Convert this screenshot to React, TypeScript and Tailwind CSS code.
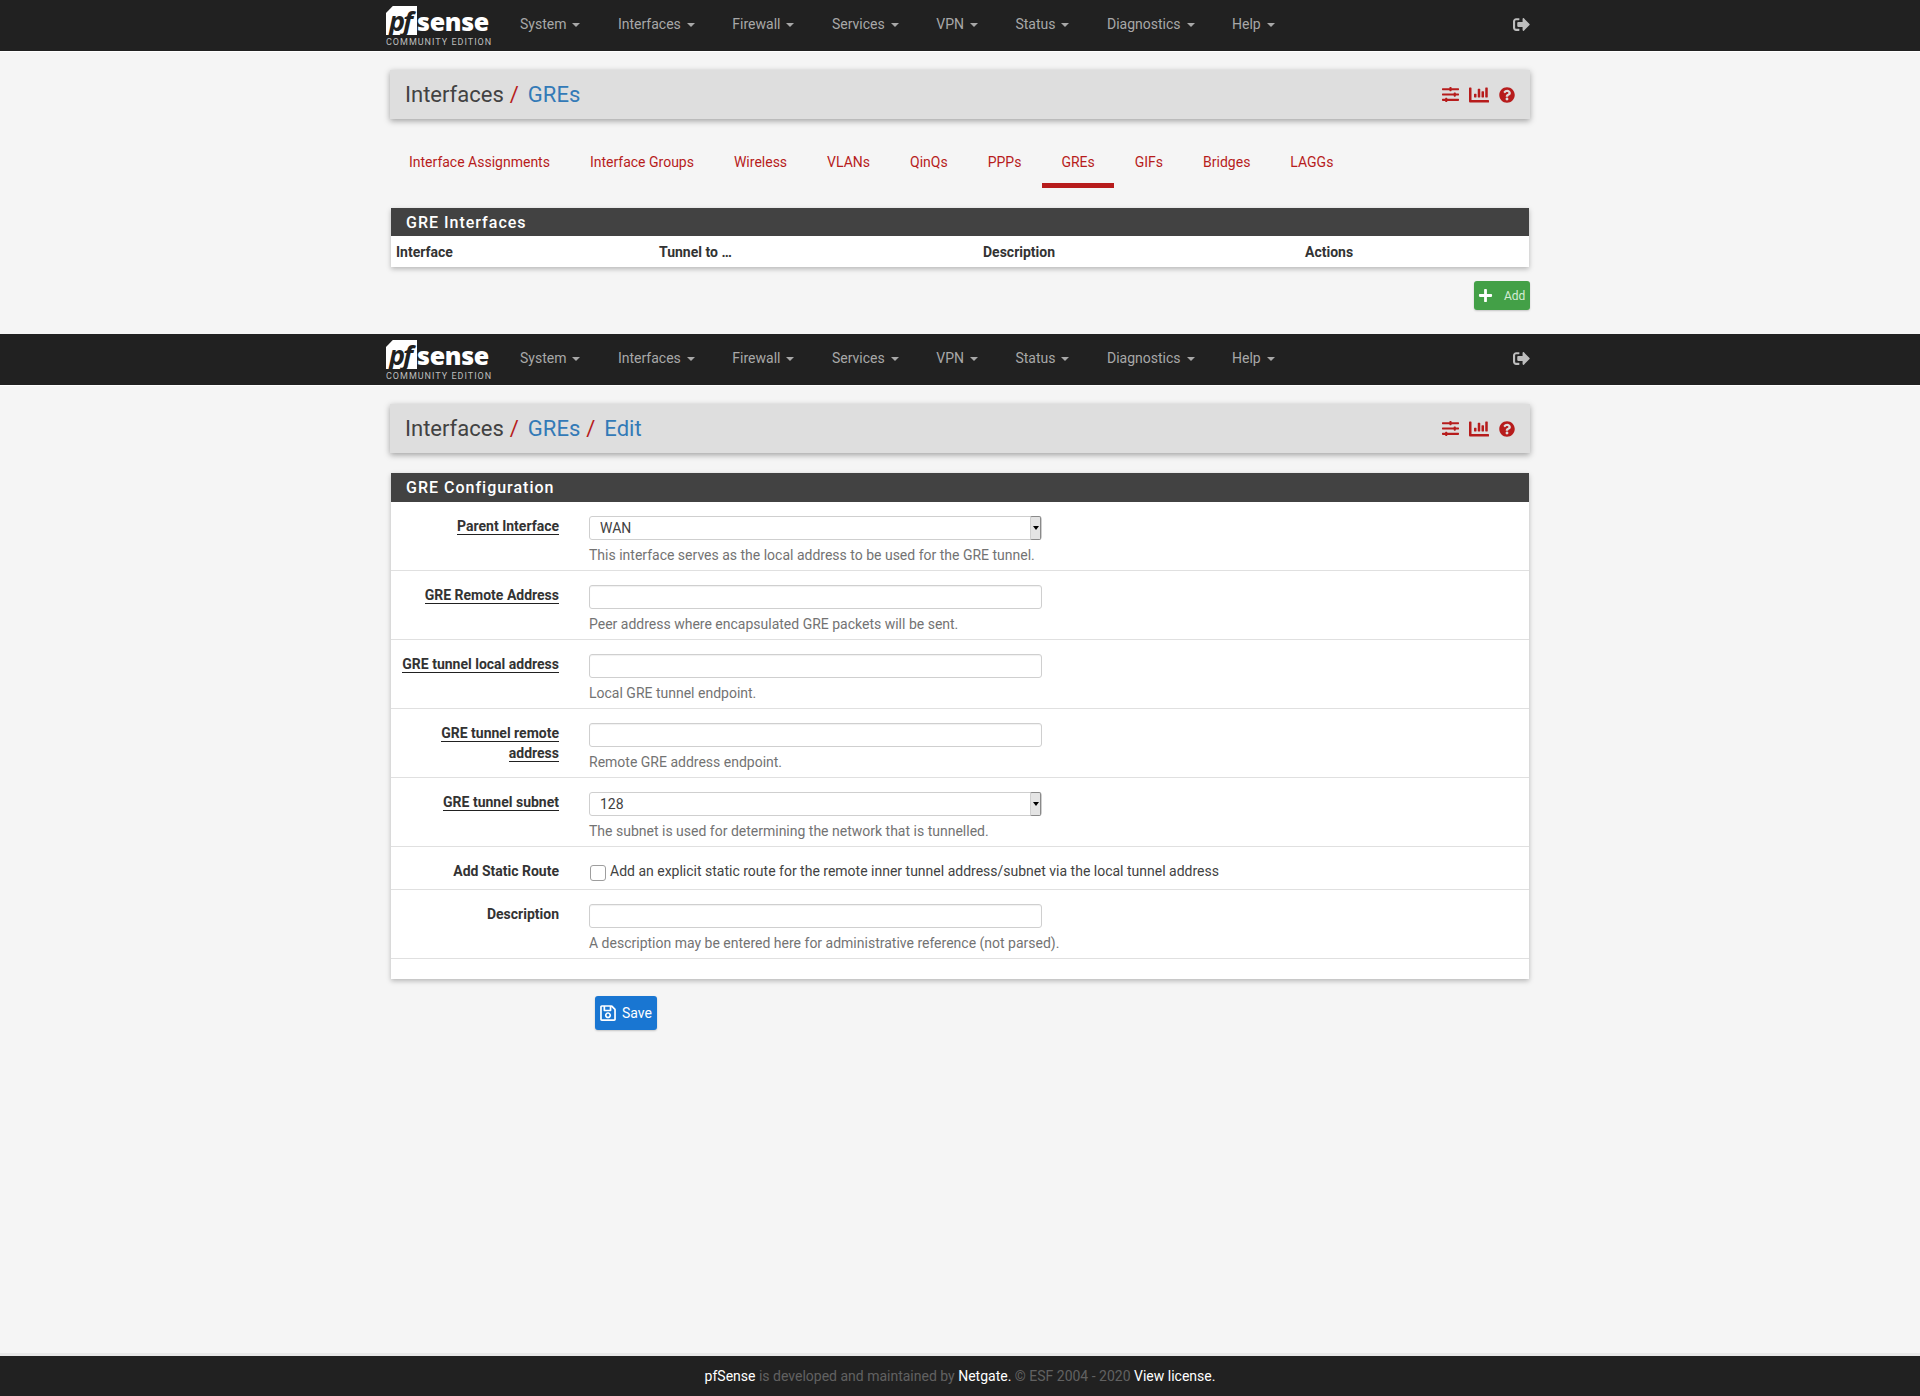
import { FaChartBar, FaPlus, FaQuestionCircle, FaRegSave, FaSignOutAlt, FaSlidersH } from "react-icons/fa";

const menu = ["System", "Interfaces", "Firewall", "Services", "VPN", "Status", "Diagnostics", "Help"];
const tabs = ["Interface Assignments", "Interface Groups", "Wireless", "VLANs", "QinQs", "PPPs", "GREs", "GIFs", "Bridges", "LAGGs"];

function Logo() {
  return (
    <div className="w-[110px] shrink-0 ml-[-4px] mb-[2px]">
      <div className="flex items-end h-[34px]">
        <div className="relative w-[31px] h-[29px] bg-white [clip-path:polygon(22%_0,100%_0,100%_100%,0_100%,0_24%)]">
          <span className="absolute left-[3px] top-[0px] text-[27px] leading-[29px] font-bold italic text-[#212121] font-['Open_Sans',sans-serif] tracking-[-2px]">
            pf
          </span>
        </div>
        <span className="text-[25px] leading-[30px] font-extrabold text-white font-['Open_Sans',sans-serif] tracking-[-0.3px] mb-[-1px]">
          sense
        </span>
      </div>
      <div className="text-[9px] leading-[11px] mt-[2px] text-[#bdbdbd] tracking-[1px] whitespace-nowrap">
        COMMUNITY EDITION
      </div>
    </div>
  );
}

function Navbar() {
  return (
    <nav className="h-[52px] bg-[#212121] border-b border-white shrink-0">
      <div className="w-[1140px] mx-auto h-[51px] flex items-center relative">
        <Logo />
        <ul className="flex items-center gap-[37.5px] ml-[24px] mb-[2px]">
          {menu.map((item) => (
            <li key={item} className="flex items-center text-[14px] text-[#a8a8a8]">
              {item}
              <span className="ml-[6px] mt-[1px] border-x-[4px] border-x-transparent border-t-[4px] border-t-[#a8a8a8]" />
            </li>
          ))}
        </ul>
        <FaSignOutAlt className="ml-auto mb-[3px] text-[17px] text-[#bdbdbd]" />
      </div>
    </nav>
  );
}

function Breadcrumb({ items }: { items: string[] }) {
  return (
    <div className="mt-[18px] h-[49px] bg-[#dedede] shadow-[0_2px_6px_rgba(0,0,0,0.35)] flex items-center justify-between pl-[15px] pr-[15px]">
      <h1 className="text-[22px] text-[#424242] flex items-center">
        <span>Interfaces</span>
        {items.map((item) => (
          <span key={item} className="flex items-center">
            <span className="text-[#b71c1c] ml-[6px] mr-[9px]">/</span>
            <span className="text-[#337ab7]">{item}</span>
          </span>
        ))}
      </h1>
      <div className="flex items-center gap-[10px] text-[#b71c1c] text-[16px]">
        <FaSlidersH className="text-[17px]" />
        <FaChartBar className="text-[20px]" />
        <FaQuestionCircle />
      </div>
    </div>
  );
}

function PanelHeading({ title, tall }: { title: string; tall?: boolean }) {
  return (
    <div className={`${tall ? "h-[29px]" : "h-[28px]"} bg-[#424242] text-white text-[16px] font-medium leading-[30px] pl-[15px] tracking-[1px]`}>
      {title}
    </div>
  );
}

function TextInput() {
  return <input type="text" className="block w-[453px] h-[24px] bg-white border border-[#cfcfcf] rounded-[3px] px-[10px] text-[14px] shadow-[inset_0_1px_1px_rgba(0,0,0,0.06)]" />;
}

function SelectInput({ value }: { value: string }) {
  return (
    <div className="relative w-[453px] h-[24px]">
      <select defaultValue={value} className="block w-full h-full appearance-none bg-white border border-[#cfcfcf] rounded-[3px] pl-[10px] text-[14px] text-[#424242]">
        <option>{value}</option>
      </select>
      <span className="absolute right-[1px] top-0 w-[11px] h-[24px] bg-[#e4e4e4] border-[1px] border-[#8a8a8a] border-l-[#cfcfcf] rounded-[2px] flex items-center justify-center">
        <span className="border-x-[3px] border-x-transparent border-t-[4px] border-t-black" />
      </span>
    </div>
  );
}

function FormRow({ label, help, children, plain }: { label: string; help?: string; children: React.ReactNode; plain?: boolean }) {
  return (
    <div className={`flex border-b border-[#e0e0e0] pt-[14px] ${help ? "pb-[5px]" : "pb-[8px]"}`}>
      <label className="w-[168px] text-right text-[14px] leading-[20px] font-bold text-[#333] shrink-0">
        <span className={plain ? "" : "border-b border-[#212121]"}>{label}</span>
      </label>
      <div className="ml-[30px]">
        {children}
        {help && <p className="mt-[5px] text-[14px] leading-[20px] text-[#737373]">{help}</p>}
      </div>
    </div>
  );
}

export default function App() {
  return (
    <div className="min-h-[1396px] flex flex-col bg-[#f5f5f5] font-['Roboto',sans-serif] text-[#333]">
      <Navbar />
      <main className="w-[1140px] mx-auto">
        <Breadcrumb items={["GREs"]} />
        <ul className="flex gap-[2px] mt-[33px]">
          {tabs.map((tab) => (
            <li key={tab} className={`px-[19px] pb-[11px] text-[14px] leading-[20px] text-[#b71c1c] border-b-[5px] ${tab === "GREs" ? "border-[#b71c1c]" : "border-transparent"}`}>
              {tab}
            </li>
          ))}
        </ul>
        <section className="mt-[20px] mx-[1px] shadow-[0_2px_5px_rgba(0,0,0,0.26)]">
          <PanelHeading title="GRE Interfaces" />
          <table className="w-full table-fixed bg-white">
            <thead>
              <tr className="h-[31px] text-left text-[14px] font-bold text-[#333]">
                <th className="w-[264px] pl-[5px] pt-[1px] font-bold">Interface</th>
                <th className="w-[324px] pl-[4px] pt-[1px] font-bold">Tunnel to …</th>
                <th className="w-[322px] pl-[4px] pt-[1px] font-bold">Description</th>
                <th className="pl-[4px] pt-[1px] font-bold">Actions</th>
              </tr>
            </thead>
          </table>
        </section>
        <div className="flex justify-end mt-[14px]">
          <button className="h-[29px] w-[56px] bg-[#43a047] rounded-[3px] flex items-center pl-[4px] text-white shadow-[0_1px_2px_rgba(0,0,0,0.2)]">
            <FaPlus className="text-[15px]" />
            <span className="ml-[11px] text-[12px] text-[#d5ecd6]">Add</span>
          </button>
        </div>
      </main>
      <div className="h-[24px] shrink-0" />
      <Navbar />
      <main className="w-[1140px] mx-auto">
        <Breadcrumb items={["GREs", "Edit"]} />
        <section className="mt-[20px] mx-[1px] bg-white shadow-[0_2px_5px_rgba(0,0,0,0.26)] pb-[20px]">
          <PanelHeading title="GRE Configuration" tall />
          <FormRow label="Parent Interface" help="This interface serves as the local address to be used for the GRE tunnel.">
            <SelectInput value="WAN" />
          </FormRow>
          <FormRow label="GRE Remote Address" help="Peer address where encapsulated GRE packets will be sent.">
            <TextInput />
          </FormRow>
          <FormRow label="GRE tunnel local address" help="Local GRE tunnel endpoint.">
            <TextInput />
          </FormRow>
          <FormRow label="GRE tunnel remote address" help="Remote GRE address endpoint.">
            <TextInput />
          </FormRow>
          <FormRow label="GRE tunnel subnet" help="The subnet is used for determining the network that is tunnelled.">
            <SelectInput value="128" />
          </FormRow>
          <FormRow label="Add Static Route" plain>
            <label className="flex items-start text-[14px] leading-[20px] text-[#424242]">
              <input type="checkbox" className="appearance-none w-[16px] h-[16px] mt-[4px] mr-[4px] ml-[1px] bg-white border border-[#9e9e9e] rounded-[3px]" />
              Add an explicit static route for the remote inner tunnel address/subnet via the local tunnel address
            </label>
          </FormRow>
          <FormRow label="Description" plain help="A description may be entered here for administrative reference (not parsed).">
            <TextInput />
          </FormRow>
        </section>
        <button className="mt-[17px] ml-[205px] w-[62px] h-[34px] bg-[#1976d2] rounded-[3px] flex items-center pl-[4px] text-white text-[14px] shadow-[0_1px_2px_rgba(0,0,0,0.2)]">
          <FaRegSave className="text-[18px]" />
          <span className="ml-[5px]">Save</span>
        </button>
      </main>
      <footer className="mt-auto h-[43px] bg-[#212121] border-t-[3px] border-[#e8e8e8] text-center text-[14px] leading-[40px] text-[#616161]">
        <span className="text-white">pfSense</span> is developed and maintained by <span className="text-white">Netgate.</span> © ESF 2004 - 2020 <span className="text-white">View license.</span>
      </footer>
    </div>
  );
}
